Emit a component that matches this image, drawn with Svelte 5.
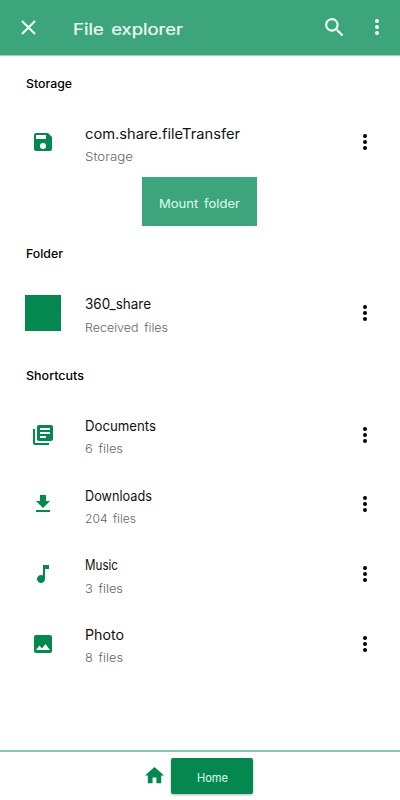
<script>
    // each text carries the width it takes up in the list
    const sections = [
        {
            title: "Storage",
            width: 46,
            mount: true,
            rows: [
                { icon: "save", name: "com.share.fileTransfer", nameWidth: 155, info: "Storage", infoWidth: 48 },
            ],
        },
        {
            title: "Folder",
            width: 37,
            rows: [
                { icon: "square", name: "360_share", nameWidth: 66, info: "Received files", infoWidth: 83 },
            ],
        },
        {
            title: "Shortcuts",
            width: 58,
            rows: [
                { icon: "documents", name: "Documents", nameWidth: 71, info: "6 files", infoWidth: 38 },
                { icon: "download", name: "Downloads", nameWidth: 67, info: "204 files", infoWidth: 51 },
                { icon: "music", name: "Music", nameWidth: 33, info: "3 files", infoWidth: 38 },
                { icon: "photo", name: "Photo", nameWidth: 39, info: "8 files", infoWidth: 38 },
            ],
        },
    ];

    const icons = {
        save: "M17 3H5a2 2 0 0 0-2 2v14a2 2 0 0 0 2 2h14a2 2 0 0 0 2-2V7l-4-4zm-5 16a3 3 0 1 1 0-6 3 3 0 0 1 0 6zm3-10H5V5h10v4z",
        documents: "M4 6H2v14c0 1.100.9 2 2 2h14v-2H4V6zm16-4H8c-1.100 0-2 .9-2 2v12c0 1.100.9 2 2 2h12c1.100 0 2-.9 2-2V4c0-1.100-.9-2-2-2zm-1 9H9V9h10v2zm-4 4H9v-2h6v2zm4-8H9V5h10v2z",
        download: "M19 9h-4V3H9v6H5l7 7 7-7zM5 18v2h14v-2H5z",
        music: "M12 3v10.550A4 4 0 1 0 14 17V7h4V3h-6z",
        photo: "M21 19V5a2 2 0 0 0-2-2H5a2 2 0 0 0-2 2v14a2 2 0 0 0 2 2h14a2 2 0 0 0 2-2zM8.500 13.500l2.500 3.010L14.500 12l4.500 6H5l3.500-4.500z",
        home: "M10 20v-6h4v6h5v-8h3L12 3 2 12h3v8z",
        close: "M19 6.410L17.590 5 12 10.590 6.410 5 5 6.410 10.590 12 5 17.590 6.410 19 12 13.410 17.590 19 19 17.590 13.410 12z",
        search: "M15.500 14h-.790l-.280-.270A6.500 6.500 0 1 0 13.730 14.430l.270.280v.790l5 4.990L20.490 19l-4.990-5zm-6 0a4.500 4.500 0 1 1 0-9 4.500 4.500 0 0 1 0 9z",
        more: "M12 8a2 2 0 1 0 0-4 2 2 0 0 0 0 4zm0 2a2 2 0 1 0 0 4 2 2 0 0 0 0-4zm0 6a2 2 0 1 0 0 4 2 2 0 0 0 0-4z",
    };
</script>

{#snippet icon(name, size)}
    <svg class="icon" width={size} height={size} viewBox="0 0 24 24">
        <path d={icons[name]} />
    </svg>
{/snippet}

{#snippet label(text, width, kind)}
    <svg class="label {kind}" {width} height="20">
        <text x="0" y="15" textLength={width} lengthAdjust="spacingAndGlyphs">{text}</text>
    </svg>
{/snippet}

<div class="screen">
    <header class="toolbar">
        <button class="close" aria-label="Close">{@render icon("close", 25)}</button>
        <h1>{@render label("File explorer", 110, "heading")}</h1>
        <button class="search" aria-label="Search">{@render icon("search", 25)}</button>
        <button class="menu" aria-label="More">{@render icon("more", 24)}</button>
    </header>

    <main>
        {#each sections as section}
            <section>
                <h2>{@render label(section.title, section.width, "title")}</h2>
                {#each section.rows as row}
                    <div class="row">
                        <div class="thumb">
                            {#if row.icon === "square"}
                                <span class="square"></span>
                            {:else}
                                {@render icon(row.icon, 24)}
                            {/if}
                        </div>
                        <div class="details">
                            {@render label(row.name, row.nameWidth, "name")}
                            {@render label(row.info, row.infoWidth, "info")}
                        </div>
                        <button class="more" aria-label="Options">{@render icon("more", 24)}</button>
                    </div>
                {/each}
                {#if section.mount}
                    <button class="mount">{@render label("Mount folder", 81, "action")}</button>
                {/if}
            </section>
        {/each}
    </main>

    <footer>
        {@render icon("home", 23)}
        <button class="home">{@render label("Home", 31, "action")}</button>
    </footer>
</div>

<style>
    :global(body) {
        margin: 0;
        background: #fff;
    }

    .screen {
        display: flex;
        flex-direction: column;
        width: 400px;
        height: 800px;
        overflow: hidden;
        background: #fff;
        font-family: Inter, "Noto Sans", sans-serif;
    }

    button {
        display: flex;
        align-items: center;
        justify-content: center;
        padding: 0;
        border: none;
        background: none;
        color: inherit;
        font: inherit;
        cursor: pointer;
    }

    h1,
    h2 {
        margin: 0;
        font-weight: 400;
        line-height: 0;
    }

    .icon,
    .label {
        display: block;
        flex-shrink: 0;
        fill: currentColor;
    }

    .label {
        overflow: visible;
        word-spacing: 2px;
    }

    .toolbar {
        display: flex;
        box-sizing: border-box;
        height: 55px;
        flex-shrink: 0;
        padding-top: 15px;
        align-items: flex-start;
        background: #3da57b;
        color: #effff8;
        box-shadow: 0 1px 1px rgba(61, 165, 123, 0.5);
    }

    .close {
        margin-left: 16px;
    }

    .toolbar h1 {
        margin: 5px 0 0 32px;
    }

    .search {
        margin-left: 139px;
    }

    .menu {
        margin-left: 18px;
    }

    .heading {
        font-size: 16px;
        stroke: currentColor;
        stroke-width: 0.2px;
    }

    main {
        flex: 1;
        padding-top: 0.5px;
    }

    h2 {
        display: flex;
        box-sizing: border-box;
        height: 52.2px;
        padding: 17px 0 0 25.5px;
        color: #000;
    }

    .title {
        font-size: 12px;
        font-weight: 500;
    }

    .row {
        display: flex;
        height: 69.6px;
        align-items: center;
    }

    .thumb {
        display: flex;
        width: 36px;
        margin-left: 25px;
        justify-content: center;
        color: #058850;
    }

    .square {
        width: 36px;
        height: 36px;
        background: #058850;
    }

    .details {
        display: flex;
        flex-direction: column;
        gap: 2.5px;
        margin-left: 24px;
        padding-top: 5px;
    }

    .name {
        color: #111;
        font-size: 14px;
    }

    .info {
        color: #666;
        font-size: 12px;
        font-weight: 300;
    }

    .more {
        margin: 0 23px 0 auto;
        color: #000;
    }

    .mount {
        width: 115px;
        height: 48.7px;
        margin-left: 142px;
        padding-top: 2px;
        background: #3da57b;
        color: #dffff0;
    }

    .action {
        font-size: 12px;
    }

    footer {
        display: flex;
        box-sizing: border-box;
        height: 50px;
        flex-shrink: 0;
        padding: 6px 0 0 143px;
        border-top: 2px solid #8bc9ae;
        color: #058850;
    }

    footer > .icon {
        margin-top: 6px;
    }

    .home {
        width: 82px;
        height: 36px;
        margin-left: 5px;
        padding-top: 1px;
        border-radius: 2px;
        background: #058850;
        color: #dffff0;
        box-shadow: 0 1px 3px rgba(0, 0, 0, 0.3);
    }
</style>
